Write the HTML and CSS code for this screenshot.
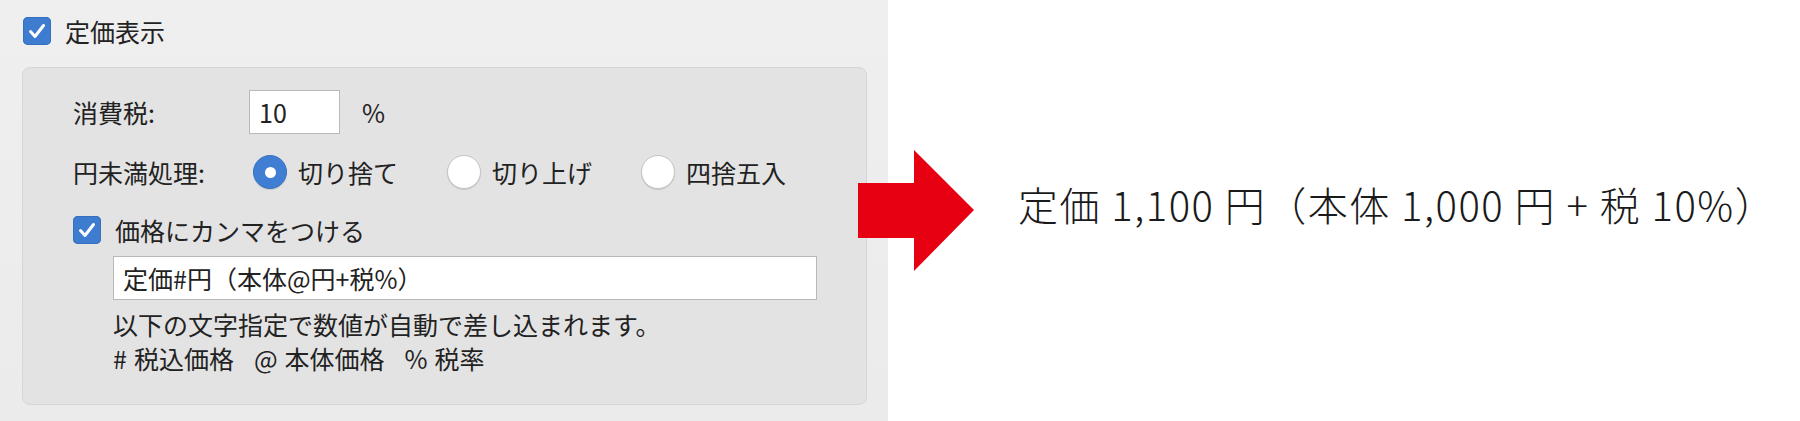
FILE: index.html
```html
<!DOCTYPE html>
<html lang="ja">
  <head>
    <meta charset="UTF-8" />
    <meta name="viewport" content="width=device-width, initial-scale=1.0" />
    <title>定価表示</title>
    <link rel="stylesheet" href="styles.css">
  </head>
  <body>
    <div class="page">
      <div class="panel">
        <label class="check top-check">
          <span class="box-check">
            <svg viewBox="0 0 28 28"><path d="M7.5 14.5l4.5 5 8.5-11" /></svg>
          </span>
          <span>定価表示</span>
        </label>

        <div class="group">
          <div class="row row-tax">
            <span class="label">消費税:</span>
            <span class="field small">10</span>
            <span class="unit">%</span>
          </div>

          <div class="row row-round">
            <span class="label">円未満処理:</span>
            <div class="radios">
              <label class="radio on"><span class="dot"></span>切り捨て</label>
              <label class="radio"><span class="dot"></span>切り上げ</label>
              <label class="radio"><span class="dot"></span>四捨五入</label>
            </div>
          </div>

          <label class="check row-comma">
            <span class="box-check">
              <svg viewBox="0 0 28 28"><path d="M7.5 14.5l4.5 5 8.5-11" /></svg>
            </span>
            <span>価格にカンマをつける</span>
          </label>

          <div class="indent">
            <span class="field wide">定価#円（本体@円+税%）</span>
            <div class="help">
              <p>以下の文字指定で数値が自動で差し込まれます。</p>
              <p class="keys">
                <span><b>#</b>税込価格</span>
                <span><b>@</b>本体価格</span>
                <span><b>%</b>税率</span>
              </p>
            </div>
          </div>
        </div>
      </div>

      <div class="result">
        <svg class="arrow" viewBox="0 0 116 121">
          <polygon points="0,33 56,33 56,0 116,60 56,121 56,88 0,88" />
        </svg>
        <span class="sample">定価 1,100 円（本体 1,000 円 + 税 10%）</span>
      </div>
    </div>
  </body>
</html>
```

FILE: styles.css
```css
body {
  margin: 0;
  padding: 0;
  background: #fff;
  color: #222;
  font-family: 'Noto Sans CJK JP', 'Noto Sans', sans-serif;
  font-size: 25px;
}
.page {
  display: flex;
  height: 421px;
  overflow: hidden;
}
.panel {
  width: 888px;
  flex-shrink: 0;
  box-sizing: border-box;
  padding: 17px 21px 0 22px;
  background: linear-gradient(180deg, #efefef 0%, #ebebeb 100%);
}
.check {
  display: flex;
  align-items: center;
  gap: 14px;
  height: 28px;
}
.top-check {
  margin-left: 1px;
}
.box-check {
  width: 28px;
  height: 28px;
  border-radius: 5px;
  background: #3e7ccf;
  box-shadow: inset 0 0 0 1px #3570c0;
  display: flex;
}
.box-check svg {
  width: 28px;
  height: 28px;
}
.box-check path {
  fill: none;
  stroke: #fff;
  stroke-width: 3;
  stroke-linecap: round;
  stroke-linejoin: round;
}
.group {
  margin-top: 22px;
  height: 338px;
  box-sizing: border-box;
  border: 1px solid #d6d6d6;
  border-radius: 8px;
  background: #e3e3e3;
  padding: 22px 0 0 50px;
}
.row {
  display: flex;
  align-items: center;
}
.label {
  width: 176px;
  flex-shrink: 0;
}
.field {
  display: flex;
  align-items: center;
  box-sizing: border-box;
  height: 44px;
  background: #fff;
  border: 1px solid #b9b9b9;
  padding: 0 9px;
}
.field.small {
  width: 91px;
}
.field.wide {
  width: 704px;
}
.unit {
  margin-left: 22px;
}
.row-round {
  margin-top: 21px;
  height: 34px;
}
.radios {
  display: flex;
  align-items: center;
  margin-left: 4px;
  gap: 49px;
}
.radio {
  display: flex;
  align-items: center;
  gap: 11px;
}
.dot {
  width: 34px;
  height: 34px;
  box-sizing: border-box;
  border-radius: 50%;
  background: #fff;
  border: 1px solid #c4c4c4;
  box-shadow: 0 1px 1px rgba(0, 0, 0, 0.12);
  display: flex;
  align-items: center;
  justify-content: center;
}
.radio.on .dot {
  background: #3f7ed2;
  border-color: #3a74c4;
}
.radio.on .dot::after {
  content: '';
  width: 11px;
  height: 11px;
  border-radius: 50%;
  background: #fff;
}
.row-comma {
  margin-top: 27px;
}
.indent {
  margin-left: 40px;
  margin-top: 12px;
}
.help {
  margin-top: 7px;
  line-height: 34px;
}
.help p {
  margin: 0;
}
.keys {
  display: flex;
  gap: 20px;
}
.keys b {
  font-weight: normal;
  margin-right: 7px;
}
.result {
  display: flex;
  align-items: center;
  flex: 1;
}
.arrow {
  width: 116px;
  height: 121px;
  margin-left: -30px;
  flex-shrink: 0;
}
.arrow polygon {
  fill: #e60012;
}
.sample {
  margin-left: 44px;
  margin-top: -14px;
  font-size: 40px;
  font-weight: 300;
  letter-spacing: 1.5px;
  color: #1a1a1a;
  white-space: nowrap;
}
```
